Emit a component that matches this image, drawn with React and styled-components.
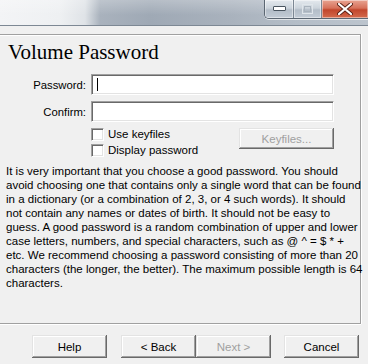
import React from 'react';
import styled, { createGlobalStyle } from 'styled-components';

const GlobalStyle = createGlobalStyle`
  html, body {
    margin: 0;
    padding: 0;
    background: #f0f0f0;
  }
  body {
    width: 368px;
    height: 364px;
    overflow: hidden;
    font-family: "Liberation Sans", Arial, sans-serif;
    font-size: 11px;
    color: #000;
  }
`;

const Window = styled.div`
  width: 368px;
  height: 364px;
  display: flex;
  flex-direction: column;
  background: #f0f0f0;
`;

const TitleBar = styled.div`
  height: 25px;
  display: flex;
  justify-content: flex-end;
  align-items: flex-start;
  border-bottom: 1px solid #7d8894;
  background:
    linear-gradient(180deg, rgba(255, 255, 255, 0.25) 0, rgba(255, 255, 255, 0) 60%),
    linear-gradient(90deg, #f3f4f6 0, #eef0f2 60px, #dfe3e7 85px, #a9b2bd 100px, #9fa9b5 150px, #a9b2bd 230px, #b5bec8 300px, #bcc4cd 368px);
`;

const Controls = styled.div`
  display: flex;
  height: 18px;
  border: 1px solid #5b6672;
  border-top: none;
  border-right: none;
  border-radius: 0 0 0 5px;
  overflow: hidden;
  box-shadow: 0 1px 0 rgba(255, 255, 255, 0.6);
`;

const CtrlButton = styled.div`
  width: ${(p) => p.$w}px;
  display: flex;
  align-items: center;
  justify-content: center;
  background: ${(p) =>
    p.$close
      ? 'linear-gradient(180deg, #e8a492 0, #d7715a 45%, #c1462c 55%, #d46a4c 100%)'
      : 'linear-gradient(180deg, #e4e9ee 0, #ccd4dc 45%, #b3bdc8 55%, #c3ccd6 100%)'};
  border-left: ${(p) => (p.$first ? 'none' : '1px solid #7c8793')};
  box-shadow: inset 0 0 0 1px rgba(255, 255, 255, 0.45);
`;

const Panel = styled.div`
  margin-top: 8px;
  width: 360px;
  height: 288px;
  border: 1px solid #a0a0a0;
  border-left: none;
  box-shadow: inset 0 1px 0 #fff, 1px 0 0 #fff, 0 1px 0 #fff;
  display: flex;
  flex-direction: column;
`;

const Heading = styled.h1`
  margin: 0;
  padding: 5px 0 0 8px;
  font-family: "Liberation Serif", "Times New Roman", serif;
  font-weight: normal;
  font-size: 21px;
  line-height: 24px;
`;

const Form = styled.div`
  margin-top: 10px;
  padding-right: 26px;
  display: grid;
  grid-template-columns: 86px 1fr;
  column-gap: 5px;
  row-gap: 6px;
  align-items: center;
`;

const Label = styled.label`
  text-align: right;
  font-size: 11.3px;
`;

const Field = styled.div`
  position: relative;
  height: 21px;
  box-sizing: border-box;
  background: #fff;
  border-top: 1px solid #a0a0a0;
  border-left: 1px solid #a0a0a0;
  border-right: 1px solid #fff;
  border-bottom: 1px solid #fff;
  box-shadow: inset 1px 1px 0 #696969, inset -1px -1px 0 #e3e3e3;
`;

const Caret = styled.span`
  position: absolute;
  left: 5px;
  top: 3px;
  width: 1px;
  height: 13px;
  background: #000;
`;

const Options = styled.div`
  grid-column: 2;
  display: flex;
  justify-content: space-between;
  align-items: flex-start;
`;

const Checks = styled.div`
  display: flex;
  flex-direction: column;
`;

const CheckRow = styled.div`
  height: 16px;
  display: flex;
  align-items: flex-start;
  gap: 4px;
`;

const Box = styled.span`
  width: 13px;
  height: 13px;
  box-sizing: border-box;
  background: #fff;
  border-top: 1px solid #a0a0a0;
  border-left: 1px solid #a0a0a0;
  border-right: 1px solid #fff;
  border-bottom: 1px solid #fff;
  box-shadow: inset 1px 1px 0 #696969, inset -1px -1px 0 #e3e3e3;
`;

const CheckText = styled.span`
  font-size: 11.5px;
  line-height: 13px;
`;

const Button = styled.div`
  width: ${(p) => p.$w || 75}px;
  height: ${(p) => p.$h || 23}px;
  box-sizing: border-box;
  display: flex;
  align-items: center;
  justify-content: center;
  font-size: 11.5px;
  background: #f0f0f0;
  color: ${(p) => (p.$disabled ? '#a0a0a0' : '#000')};
  box-shadow: inset -1px -1px 0 #696969, inset 1px 1px 0 #e3e3e3, inset -2px -2px 0 #a0a0a0, inset 2px 2px 0 #fff;
`;

const Text = styled.p`
  margin: 4px 0 0;
  padding-left: 6px;
  white-space: nowrap;
  font-size: 11.5px;
  line-height: 14px;
`;

const Footer = styled.div`
  margin-top: 11px;
  display: flex;
  padding-left: 32px;
`;

const Spacer = styled.div`
  width: ${(p) => p.$w}px;
`;

const lines = [
  'It is very important that you choose a good password. You should',
  'avoid choosing one that contains only a single word that can be found',
  'in a dictionary (or a combination of 2, 3, or 4 such words). It should',
  'not contain any names or dates of birth. It should not be easy to',
  'guess. A good password is a random combination of upper and lower',
  'case letters, numbers, and special characters, such as @ ^ = $ * +',
  'etc. We recommend choosing a password consisting of more than 20',
  'characters (the longer, the better). The maximum possible length is 64',
  'characters.',
];

const App = () => (
  <Window>
    <GlobalStyle />
    <TitleBar>
      <Controls>
        <CtrlButton $w={28} $first>
          <svg width="13" height="6" viewBox="0 0 13 6">
            <rect x="0.5" y="0.5" width="12" height="4" rx="0.5" fill="#fff" stroke="#4a5560" />
          </svg>
        </CtrlButton>
        <CtrlButton $w={27}>
          <svg width="11" height="10" viewBox="0 0 11 10">
            <rect x="0.5" y="0.5" width="10" height="9" fill="none" stroke="#dfe5ea" />
            <rect x="2.5" y="2.5" width="6" height="5" fill="none" stroke="#a9b3bd" />
          </svg>
        </CtrlButton>
        <CtrlButton $w={46} $close>
          <svg width="16" height="12" viewBox="0 0 16 12">
            <path d="M2 1 L14 11 M14 1 L2 11" stroke="#5a2418" strokeWidth="4" strokeLinecap="round" />
            <path d="M2 1 L14 11 M14 1 L2 11" stroke="#fff" strokeWidth="2.2" strokeLinecap="round" />
          </svg>
        </CtrlButton>
      </Controls>
    </TitleBar>
    <Panel>
      <Heading>Volume Password</Heading>
      <Form>
        <Label>Password:</Label>
        <Field>
          <Caret />
        </Field>
        <Label>Confirm:</Label>
        <Field />
        <Options>
          <Checks>
            <CheckRow>
              <Box />
              <CheckText>Use keyfiles</CheckText>
            </CheckRow>
            <CheckRow>
              <Box />
              <CheckText>Display password</CheckText>
            </CheckRow>
          </Checks>
          <Button $w={95} $h={21} $disabled>Keyfiles...</Button>
        </Options>
      </Form>
      <Text>
        {lines.map((l, i) => (
          <React.Fragment key={i}>
            {l}
            {i < lines.length - 1 && <br />}
          </React.Fragment>
        ))}
      </Text>
    </Panel>
    <Footer>
      <Button>Help</Button>
      <Spacer $w={14} />
      <Button>&lt; Back</Button>
      <Button $disabled>Next &gt;</Button>
      <Spacer $w={13} />
      <Button>Cancel</Button>
    </Footer>
  </Window>
);

export default App;
